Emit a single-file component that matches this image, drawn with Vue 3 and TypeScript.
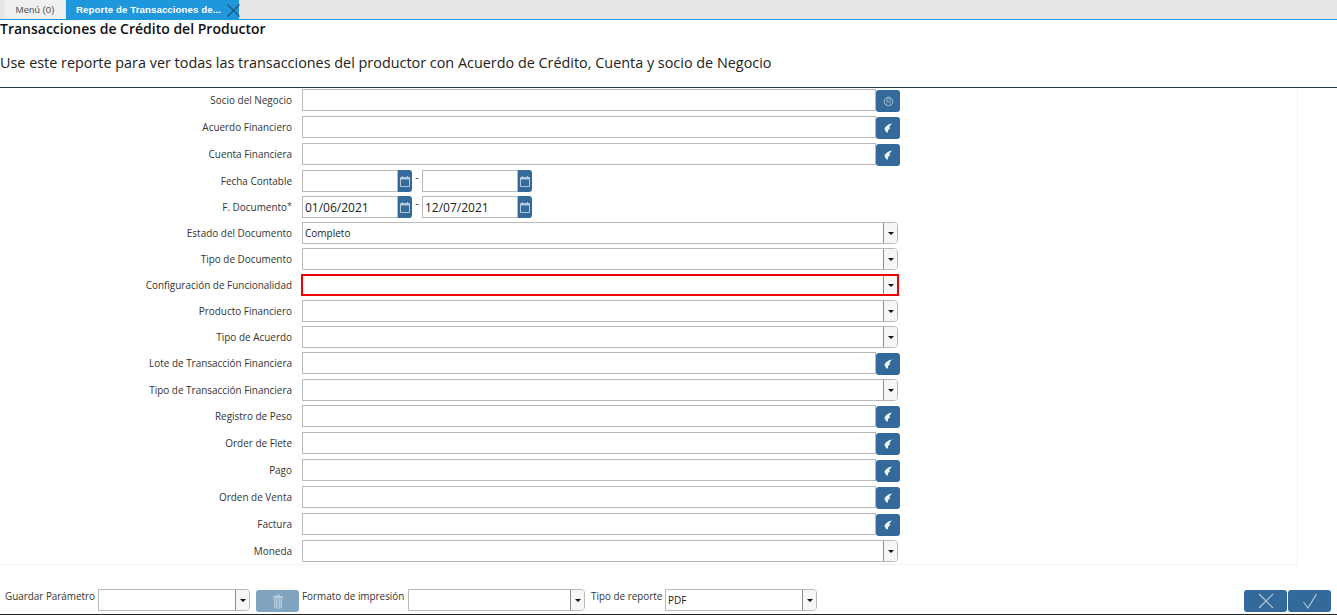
<script setup lang="ts">
type Row = { label: string; kind: 'search' | 'lookup' | 'date' | 'select'; h: number; value?: string; from?: string; to?: string; req?: boolean; err?: boolean };
const rows: Row[] = [
  { label: 'Socio del Negocio', kind: 'search', h: 27 },
  { label: 'Acuerdo Financiero', kind: 'lookup', h: 27 },
  { label: 'Cuenta Financiera', kind: 'lookup', h: 27 },
  { label: 'Fecha Contable', kind: 'date', h: 26, from: '', to: '' },
  { label: 'F. Documento', kind: 'date', h: 26, from: '01/06/2021', to: '12/07/2021', req: true },
  { label: 'Estado del Documento', kind: 'select', h: 26, value: 'Completo' },
  { label: 'Tipo de Documento', kind: 'select', h: 26 },
  { label: 'Configuración de Funcionalidad', kind: 'select', h: 26, err: true },
  { label: 'Producto Financiero', kind: 'select', h: 26 },
  { label: 'Tipo de Acuerdo', kind: 'select', h: 26 },
  { label: 'Lote de Transacción Financiera', kind: 'lookup', h: 27 },
  { label: 'Tipo de Transacción Financiera', kind: 'select', h: 26 },
  { label: 'Registro de Peso', kind: 'lookup', h: 27 },
  { label: 'Order de Flete', kind: 'lookup', h: 27 },
  { label: 'Pago', kind: 'lookup', h: 27 },
  { label: 'Orden de Venta', kind: 'lookup', h: 27 },
  { label: 'Factura', kind: 'lookup', h: 27 },
  { label: 'Moneda', kind: 'select', h: 24 }
];
</script>

<template>
  <div class="page">
    <div class="tabs">
      <div class="tab">Menú (0)</div>
      <div class="tab active">
        <span>Reporte de Transacciones de...</span>
        <svg class="tab-x" width="13" height="13" viewBox="0 0 13 13"><path d="M.5 .5L12.500 12.500M12.500 .5L.5 12.500" stroke="#25506f" stroke-width="1.100" fill="none" /></svg>
      </div>
    </div>
    <div class="head">
      <h1>Transacciones de Crédito del Productor</h1>
      <p>Use este reporte para ver todas las transacciones del productor con Acuerdo de Crédito, Cuenta y socio de Negocio</p>
    </div>
    <div class="form">
      <div v-for="r in rows" :key="r.label" class="row" :style="{ height: r.h + 'px' }">
        <label class="label">{{ r.label }}<span v-if="r.req" class="req">*</span></label>
        <template v-if="r.kind === 'date'">
          <div class="date">
            <div class="input">{{ r.from }}</div>
            <button class="cal">
              <svg width="12" height="13" viewBox="0 0 12 13"><path d="M1.500 2.500H10.500V11.500H1.500Z" stroke="#b4cadb" fill="none" /><path d="M1 2.500H11V4.500H1Z" fill="#b4cadb" /><path d="M3.500 1V3M8.500 1V3" stroke="#b4cadb" fill="none" /></svg>
            </button>
          </div>
          <span class="dash">-</span>
          <div class="date">
            <div class="input">{{ r.to }}</div>
            <button class="cal">
              <svg width="12" height="13" viewBox="0 0 12 13"><path d="M1.500 2.500H10.500V11.500H1.500Z" stroke="#b4cadb" fill="none" /><path d="M1 2.500H11V4.500H1Z" fill="#b4cadb" /><path d="M3.500 1V3M8.500 1V3" stroke="#b4cadb" fill="none" /></svg>
            </button>
          </div>
        </template>
        <template v-else-if="r.kind === 'select'">
          <div class="select wide" :class="{ err: r.err }">
            <div class="select-text">{{ r.value }}</div>
            <div class="arrow"><i /></div>
          </div>
        </template>
        <template v-else>
          <div class="input wide-input"></div>
          <button class="btn">
            <svg v-if="r.kind === 'search'" width="11" height="11" viewBox="0 0 11 11"><circle cx="5.500" cy="5.500" r="4.300" stroke="#a9c0d3" fill="none" /><circle cx="5.500" cy="4.400" r="1.800" stroke="#a9c0d3" fill="none" /><path d="M3.400 8.700V7.400M7.600 8.700V7.400" stroke="#a9c0d3" /></svg>
            <svg v-else width="9" height="10" viewBox="0 0 9 10"><path d="M8.500 .5C5 1 1.500 2.800 .5 5.800C.8 7 1.700 8.800 3 9.700C3.600 9.700 4 9.300 4 8.600C3.900 7.200 4.500 6 6.500 5.300L5.300 4.300C5.800 3 7 1.500 8.500 .5Z" fill="#f4f7fa" /></svg>
          </button>
        </template>
      </div>
    </div>
    <div class="foot">
      <div class="foot-left">
        <span class="foot-label first">Guardar Parámetro</span>
        <div class="select s137"><div class="select-text"></div><div class="arrow"><i /></div></div>
        <button class="trash">
          <svg width="12" height="15" viewBox="0 0 12 15"><path d="M1 2.500H11M4.500 2.500V1H7.500V2.500" stroke="#b6cbdb" fill="none" /><path d="M2 3.500L2.700 14H9.300L10 3.500ZM4.500 5V12.500M7.500 5V12.500" stroke="#b6cbdb" fill="#98b5cc" /></svg>
        </button>
        <span class="foot-label fmt">Formato de impresión</span>
        <div class="select s177"><div class="select-text"></div><div class="arrow"><i /></div></div>
        <span class="foot-label tipo">Tipo de reporte</span>
        <div class="select s152"><div class="select-text pdf">PDF</div><div class="arrow"><i /></div></div>
      </div>
      <div class="actions">
        <button class="act">
          <svg width="16" height="16" viewBox="0 0 16 16"><path d="M1 1L15 15M15 1L1 15" stroke="#b9cddd" stroke-width="1.100" fill="none" /></svg>
        </button>
        <button class="act">
          <svg width="16" height="16" viewBox="0 0 16 16"><path d="M1.500 9L6 15L14.500 1" stroke="#b9cddd" stroke-width="1.100" fill="none" /></svg>
        </button>
      </div>
    </div>
  </div>
</template>

<style scoped>
.page {
  width: 1337px;
  height: 615px;
  overflow: hidden;
  display: flex;
  flex-direction: column;
  background: #fff;
  font-family: "Open Sans", "Noto Sans", sans-serif;
  color: #2d2d2d;
  border-bottom: 1px solid #222;
  box-sizing: border-box;
  position: relative;
}
.tabs {
  height: 20px;
  flex: none;
  box-sizing: border-box;
  background: #e6e6e6;
  border-bottom: 1px solid #1f97dc;
  display: flex;
  padding-left: 5px;
  gap: 1px;
}
.tab {
  width: 60px;
  height: 19px;
  box-sizing: border-box;
  background: #f0f0f0;
  font: 9.7px/20px "Liberation Sans", Arial, sans-serif;
  color: #555;
  text-align: center;
}
.tab.active {
  width: 173px;
  background: #1f97dc;
  color: #fff;
  font-weight: 700;
  text-align: left;
  padding-left: 10px;
  position: relative;
  letter-spacing: 0.08px;
}
.tab-x {
  position: absolute;
  left: 161px;
  top: 4px;
}
.head {
  flex: none;
  height: 68px;
  box-sizing: border-box;
  border-bottom: 1px solid #1b3a55;
  color: #111;
}
.head h1 {
  margin: -1px 0 0;
  font-size: 14px;
  font-weight: 600;
  line-height: 20px;
}
.head p {
  margin: 14px 0 0;
  font-size: 14.4px;
  font-weight: 400;
  line-height: 20px;
  color: #222;
}
.form {
  flex: none;
  width: 1298px;
  height: 477px;
  box-sizing: border-box;
  border-right: 1px solid #f3f3f3;
  border-bottom: 1px solid #f3f3f3;
  padding-top: 1px;
}
.row {
  display: flex;
  align-items: flex-start;
  box-sizing: border-box;
}
.label {
  width: 292px;
  flex: none;
  margin-right: 10px;
  font-size: 9.95px;
  line-height: 22px;
  text-align: right;
  white-space: nowrap;
  color: #333;
}
.req {
  display: inline-block;
  font-size: 9px;
  line-height: 10px;
  vertical-align: 2px;
  color: #444;
}
.input {
  height: 22px;
  box-sizing: border-box;
  border: 1px solid #b9b9b9;
  background: #fff;
  font-size: 12px;
  line-height: 21px;
  padding-left: 2px;
  color: #222;
}
.wide-input {
  width: 574px;
}
.btn {
  width: 24px;
  height: 22px;
  margin-top: 1px;
  padding: 0;
  border: none;
  border-radius: 3px;
  background: #336a99;
  display: flex;
  align-items: center;
  justify-content: center;
}
.date {
  width: 110px;
  display: flex;
  position: relative;
}
.date .input {
  width: 96px;
  flex: none;
}
.cal {
  width: 14px;
  height: 22px;
  padding: 0;
  border: none;
  border-radius: 0 3px 3px 0;
  background: #336a99;
  display: flex;
  align-items: center;
  justify-content: center;
}
.dash {
  width: 10px;
  font-size: 11px;
  line-height: 14px;
  text-align: center;
}
.select {
  display: flex;
  height: 22px;
  box-sizing: border-box;
  border: 1px solid #b9b9b9;
  border-radius: 0 4px 4px 0;
  background: #fff;
}
.select.wide {
  width: 596px;
}
.select.err {
  border: 2px solid #ee0000;
  border-radius: 0;
  width: 598px;
  margin-left: -1px;
}
.select-text {
  flex: 1;
  font-size: 10px;
  line-height: 20px;
  padding-left: 2px;
  color: #222;
}
.select-text.pdf {
  line-height: 21px;
}
.arrow {
  width: 13px;
  flex: none;
  background: #f6f6f6;
  border-left: 1px solid #8d8d8d;
  border-radius: 0 3px 3px 0;
  display: flex;
  align-items: center;
  justify-content: center;
}
.arrow i {
  width: 0;
  height: 0;
  border-left: 3.5px solid transparent;
  border-right: 3.5px solid transparent;
  border-top: 3.5px solid #111;
}
.foot {
  flex: none;
  height: 49px;
  box-sizing: border-box;
  display: flex;
  justify-content: space-between;
  padding-top: 24px;
  padding-right: 6px;
}
.foot-left {
  display: flex;
  align-items: flex-start;
  font-size: 10px;
}
.foot-label {
  font-size: 9.9px;
  line-height: 14px;
  white-space: nowrap;
  color: #333;
}
.foot-label.first { margin-left: 5px; width: 93px; }
.foot-label.fmt { width: 106px; }
.foot-label.tipo { width: 74px; margin-left: 6px; }
.s137 { width: 152px; }
.s177 { width: 177px; }
.s152 { width: 152px; }
.trash {
  width: 43px;
  height: 22px;
  margin: 1px 3px 0 6px;
  padding: 0;
  border: none;
  border-radius: 3px;
  background: #80a3c0;
  display: flex;
  align-items: center;
  justify-content: center;
}
.actions {
  display: flex;
  gap: 1px;
  margin-top: 1px;
}
.act {
  width: 43px;
  height: 22px;
  padding: 0;
  border: none;
  border-radius: 3px;
  background: #336a99;
  display: flex;
  align-items: center;
  justify-content: center;
}
</style>
